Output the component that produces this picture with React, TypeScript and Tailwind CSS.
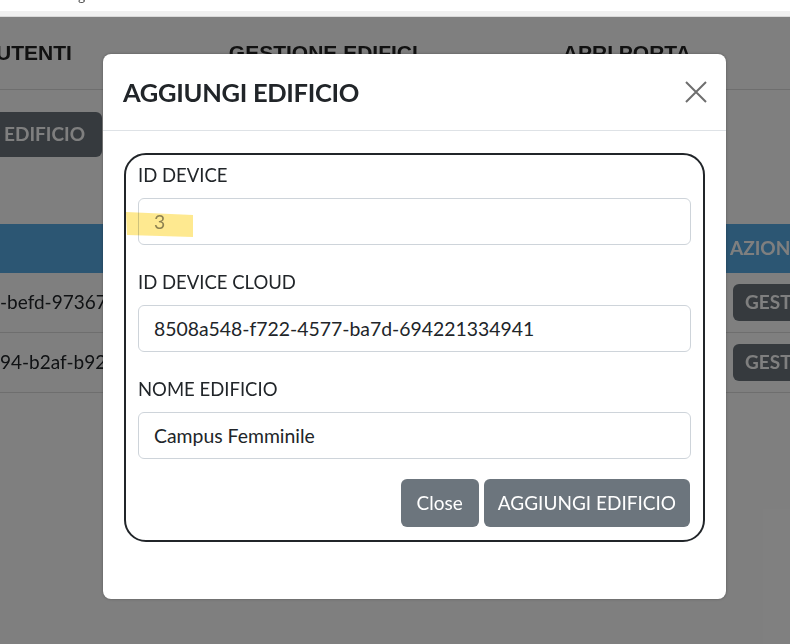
import React from "react";

const rows = [
  { id: "-befd-97367c5e1a9d4f", btn: "GESTISCI" },
  { id: "94-b2af-b92e6d41c07a", btn: "GESTISCI" },
];

const Field: React.FC<{ label: string; value: string; muted?: boolean; highlight?: boolean }> = ({
  label,
  value,
  muted,
  highlight,
}) => {
  return (
    <div className="flex flex-col">
      <label className="text-[18.5px] leading-[28px] text-[#212529] mb-[9px]">{label}</label>
      <div className="relative">
        <div
          className={
            "h-[47px] flex items-center px-[15px] border border-[#ced4da] rounded-[6px] bg-white text-[19.4px] " +
            (muted ? "text-[#8f8f8f]" : "text-[#212529]")
          }
        >
          {value}
        </div>
        {highlight && (
          <svg
            className="absolute left-[-13px] top-[14px] mix-blend-multiply pointer-events-none"
            width="70"
            height="28"
            viewBox="0 0 70 28"
          >
            {/* marker stroke over the value */}
            <polygon points="1,0 68,3 68,25 2,23" fill="#fee784" opacity="0.9" />
          </svg>
        )}
      </div>
    </div>
  );
};

export default function App() {
  return (
    <div className="w-[790px] h-[644px] overflow-hidden flex flex-col bg-white font-['Lato',sans-serif]">
      {/* browser top strip */}
      <div className="h-[11px] bg-white overflow-hidden">
        <span className="block ml-[78px] -mt-[12px] text-[14px] leading-[16px] text-[#555]">g</span>
      </div>
      <div className="h-[6px] bg-[#f0f0f0] border-b border-[#d9d9d9]" />

      <div className="relative flex-1 overflow-hidden bg-white">
        {/* page behind the modal */}
        <div className="flex flex-col">
          <div className="h-[73px] border-b border-[#dcdcdc] flex items-center font-['Liberation_Sans',sans-serif] font-bold text-[21px] text-[#222] whitespace-nowrap">
            <span className="-ml-[4px]">UTENTI</span>
            <span className="ml-[157px]">GESTIONE EDIFICI</span>
            <span className="ml-[145px]">APRI PORTA</span>
          </div>

          <div className="mt-[22px] w-[102px] overflow-hidden flex justify-end">
            <button className="shrink-0 h-[45px] pl-[16px] pr-[17px] rounded-[6px] bg-[#6c757d] text-white font-bold text-[19px] whitespace-nowrap">
              AGGIUNGI EDIFICIO
            </button>
          </div>

          <div className="mt-[67px]">
            <div className="grid grid-cols-[718px_1fr] h-[49px] bg-[#58ace6] text-white font-bold text-[19px] items-center">
              <span />
              <span className="px-3 whitespace-nowrap">AZIONI</span>
            </div>
            {rows.map((r) => (
              <div
                key={r.id}
                className="grid grid-cols-[718px_1fr] h-[60px] border-b border-[#dcdcdc] items-center text-[19px] text-[#212529]"
              >
                <span className="whitespace-nowrap">{r.id}</span>
                <div className="pl-[15px]">
                  <button className="h-[37px] px-3 rounded-[6px] bg-[#6c757d] text-white font-bold text-[19px] whitespace-nowrap">
                    {r.btn}
                  </button>
                </div>
              </div>
            ))}
          </div>
        </div>

        {/* backdrop */}
        <div className="absolute inset-0 bg-black/50" />

        {/* modal */}
        <div className="absolute left-[103px] top-[37px] w-[623px] h-[545px] bg-white rounded-[8px] shadow-[0_0_3px_rgba(0,0,0,0.3)] flex flex-col">
          <div className="h-[77px] px-5 flex items-center justify-between border-b border-[#dee2e6]">
            <h5 className="font-bold text-[25.5px] text-[#212529] tracking-[-0.3px]">AGGIUNGI EDIFICIO</h5>
            <button className="w-[24px] h-[24px] mr-[-2px] flex items-center justify-center" aria-label="Close">
              <svg width="22" height="22" viewBox="0 0 22 22">
                <path d="M1 1L21 21M21 1L1 21" stroke="#6e6e6e" strokeWidth="2" />
              </svg>
            </button>
          </div>

          <div className="px-[21px] pt-[22px]">
            <div className="border-[2.5px] border-[#212529] rounded-[22px] px-3 pt-[6px] pb-[13px] flex flex-col gap-[23px]">
              <Field label="ID DEVICE" value="3" muted highlight />
              <Field label="ID DEVICE CLOUD" value="8508a548-f722-4577-ba7d-694221334941" />
              <Field label="NOME EDIFICIO" value="Campus Femminile" />
              <div className="flex justify-end gap-[5px] -mt-[3px] pr-[1px]">
                <button className="h-[48px] px-[16px] rounded-[6px] bg-[#6c757d] text-white text-[19px]">Close</button>
                <button className="h-[48px] px-[14px] rounded-[6px] bg-[#6c757d] text-white text-[19px]">
                  AGGIUNGI EDIFICIO
                </button>
              </div>
            </div>
          </div>
        </div>
      </div>
    </div>
  );
}
